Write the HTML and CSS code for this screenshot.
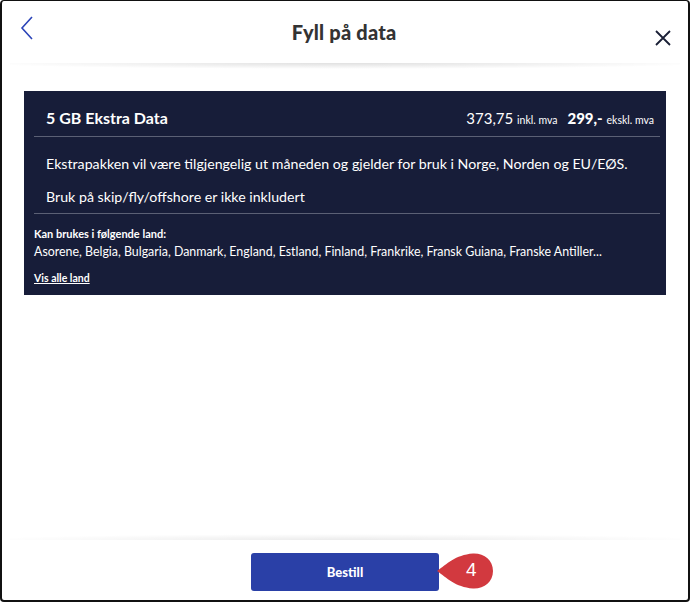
FILE: index.html
```html
<!DOCTYPE html>
<html lang="no">
<head>
<meta charset="utf-8">
<title>Fyll på data</title>
<link rel="stylesheet" href="styles.css">
</head>
<body>
<div class="dialog">
  <header class="header">
    <button class="icon-btn back" aria-label="Tilbake">
      <svg width="14" height="24" viewBox="0 0 14 24"><path d="M12 1 L2 12 L12 23" fill="none" stroke="#2b44b8" stroke-width="1.6"/></svg>
    </button>
    <h1 class="title">Fyll på data</h1>
    <button class="icon-btn close" aria-label="Lukk">
      <svg width="18" height="18" viewBox="0 0 18 18"><path d="M2 2 L16 16 M16 2 L2 16" fill="none" stroke="#1a1f36" stroke-width="1.8"/></svg>
    </button>
  </header>
  <div class="shadow-top"></div>
  <main class="content">
    <section class="card">
      <div class="card-head">
        <span class="name">5 GB Ekstra Data</span>
        <span class="price"><span class="num">373,75</span> <span class="unit">inkl. mva</span><span class="num bold">299,-</span> <span class="unit">ekskl. mva</span></span>
      </div>
      <div class="card-body">
        <p>Ekstrapakken vil være tilgjengelig ut måneden og gjelder for bruk i Norge, Norden og EU/EØS.</p>
        <p>Bruk på skip/fly/offshore er ikke inkludert</p>
      </div>
      <div class="card-foot">
        <div class="label">Kan brukes i følgende land:</div>
        <div class="countries">Asorene, Belgia, Bulgaria, Danmark, England, Estland, Finland, Frankrike, Fransk Guiana, Franske Antiller...</div>
        <a class="all" href="#">Vis alle land</a>
      </div>
    </section>
  </main>
  <div class="shadow-bottom"></div>
  <footer class="footer">
    <div class="btn-wrap">
      <button class="order">Bestill</button>
      <span class="badge">
        <svg width="58" height="38" viewBox="0 0 58 38"><path d="M0 19 C10 12 18 3 36 1.5 C47 1 56 8 56 19 C56 30 47 37 36 36.5 C18 35 10 26 0 19 Z" fill="#d2393f"/></svg>
        <span class="badge-num">4</span>
      </span>
    </div>
  </footer>
</div>
</body>
</html>
```

FILE: styles.css
```css
* { box-sizing: border-box; }
html, body { margin: 0; padding: 0; background: #fff; }
body { font-family: Lato, "Open Sans", sans-serif; }
.dialog {
  width: 690px;
  height: 602px;
  border: 2px solid #111;
  border-top-width: 1px;
  border-radius: 4px;
  display: flex;
  flex-direction: column;
  background: #fff;
  overflow: hidden;
}
.header {
  height: 62px;
  display: flex;
  align-items: center;
  justify-content: space-between;
  padding: 0 16px 0 18px;
  flex: none;
}
.icon-btn { background: none; border: 0; padding: 0; display: flex; }
.back { margin-top: -8px; }
.close { margin-top: 12px; }
.title {
  margin: 0;
  font-size: 20px;
  font-weight: 900;
  color: #333;
  letter-spacing: 0.2px;
}
.shadow-top {
  height: 6px;
  flex: none;
  margin: 0 8px;
  background: radial-gradient(ellipse 55% 100% at 50% 0%, rgba(0,0,0,0.12), rgba(0,0,0,0) 100%);
}
.content { flex: 1; padding: 22px 22px 0 22px; }
.card {
  background: #171d39;
  color: #fff;
  padding: 0 6px 0 10px;
  height: 204px;
}
.card-head {
  display: flex;
  justify-content: space-between;
  align-items: baseline;
  padding: 17px 6px 9px 12px;
  border-bottom: 1px solid #5b6075;
}
.name { font-size: 16px; font-weight: 700; }
.price { font-size: 15px; }
.unit { font-size: 10.5px; margin-right: 10px; }
.unit:last-child { margin-right: 0; }
.bold { font-weight: 900; }
.card-body {
  padding: 4px 12px 6px 12px;
  border-bottom: 1px solid #5b6075;
  font-size: 14.2px;
}
.card-body p { margin: 12px 0 0 0; line-height: 21px; }
.card-body p + p { margin-top: 12px; }
.card-foot { padding: 13px 0 0 0; }
.label { font-size: 11px; font-weight: 700; }
.countries { font-size: 12.4px; margin-top: 4px; }
.all {
  display: inline-block;
  margin-top: 13px;
  font-size: 10.5px;
  font-weight: 700;
  color: #fff;
  text-decoration: underline;
}
.shadow-bottom {
  height: 6px;
  flex: none;
  margin: 0 8px;
  background: radial-gradient(ellipse 55% 100% at 50% 100%, rgba(0,0,0,0.08), rgba(0,0,0,0) 100%);
}
.footer {
  height: 60px;
  flex: none;
  display: flex;
  justify-content: center;
  padding-top: 13px;
}
.btn-wrap { position: relative; }
.order {
  width: 188px;
  height: 38px;
  border: 0;
  border-radius: 3px;
  background: #2a40a7;
  color: #fff;
  font-family: Lato, sans-serif;
  font-size: 13px;
  font-weight: 900;
}
.badge {
  position: absolute;
  left: 186px;
  top: -1px;
  width: 58px;
  height: 38px;
}
.badge svg { display: block; }
.badge-num {
  position: absolute;
  left: 29px;
  top: 7px;
  color: #fff;
  font-family: "Liberation Sans", Arial, sans-serif;
  font-size: 19px;
}
```
